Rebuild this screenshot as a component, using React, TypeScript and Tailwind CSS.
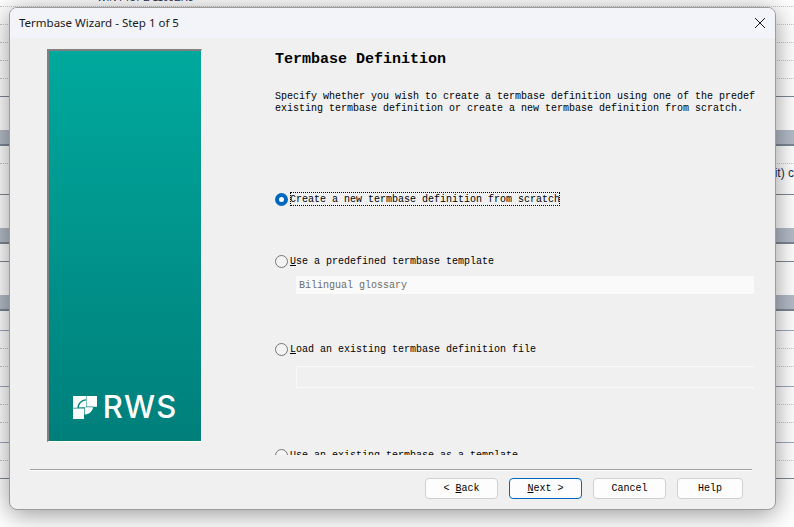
import React from "react";

const mono = "font-['Liberation_Mono',monospace]";

const Dotted = ({ h }: { h: string }) => <div className={`${h} border-b border-dotted border-[#c4c4c4]`} />;

const Solid = ({ h, line }: { h: string; line: string }) => <div className={`${h} border-b ${line}`} />;

const Band = ({ h }: { h: string }) => <div className={`${h} bg-[#b4bcc8] border-b-2 border-[#7d8794]`} />;

// the sheet behind the dialog
const BackgroundTable = () => (
  <div className="flex flex-col">
    <div className="h-[7px] border-b border-dotted border-[#c4c4c4] pl-[97px] overflow-hidden">
      <div className="text-[10px] leading-[14px] -mt-[9px] text-[#1c2c50] font-['Liberation_Sans',sans-serif]">WIN PIOPE 1105ER8</div>
    </div>
    <Dotted h="h-[18px]" />
    <Dotted h="h-[18px]" />
    <Dotted h="h-[18px]" />
    <Dotted h="h-[18px]" />
    <Solid h="h-[18px]" line="border-[#7d8794]" />
    <div className="h-[33px]" />
    <Band h="h-[16px]" />
    <Dotted h="h-[18px]" />
    <div className="h-[31px] border-b border-[#7d8794] flex justify-end items-start overflow-hidden">
      <span className="text-[12px] leading-[14px] mt-[2px] text-[#1c2c50] whitespace-nowrap font-['Liberation_Sans',sans-serif]">(64-bit) c</span>
    </div>
    <div className="h-[33px]" />
    <Band h="h-[16px]" />
    <Solid h="h-[18px]" line="border-[#7d8794]" />
    <div className="h-[33px]" />
    <Band h="h-[16px]" />
    <Solid h="h-[20px]" line="border-[#9aa6bc]" />
    <Dotted h="h-[18px]" />
    <Dotted h="h-[18px]" />
    <Solid h="h-[20px]" line="border-[#9aa6bc]" />
    <Dotted h="h-[18px]" />
    <Dotted h="h-[18px]" />
    <Solid h="h-[20px]" line="border-[#9aa6bc]" />
    <Dotted h="h-[18px]" />
    <Solid h="h-[18px]" line="border-[#7d8794]" />
  </div>
);

const RwsLogo = () => (
  <div className="flex items-center gap-[6px] text-white">
    <svg width="24" height="23" viewBox="0 0 24 23" fill="white">
      <path d="M0 0H13V3.2C8 3.6 4.8 7 4.4 11.7H0Z" />
      <path d="M13.5 0H24V10.8H20.2V10.5H13.5Z" />
      <path d="M0 12.4H11V23H0Z" />
      <path d="M5.8 11.6C6.2 8 9 5 13 4.6V11Z" />
      <path d="M11.7 11.2H20C19.6 15 16.4 18.2 11.7 18.6Z" />
    </svg>
    <span className="text-[31px] leading-[24px] font-medium tracking-[1.2px] font-['Inter',sans-serif]">RWS</span>
  </div>
);

const SidePanel = () => (
  <div className="w-[155px] h-[393px] shrink-0 flex flex-col justify-end items-center pb-[22px] border-t-2 border-l-2 border-t-[#808080] border-l-[#808080] border-r border-b border-r-white border-b-white bg-gradient-to-b from-[#00a99d] to-[#007f7b]">
    <RwsLogo />
  </div>
);

const Radio = ({ checked }: { checked?: boolean }) =>
  checked ? (
    <span className="w-[13px] h-[13px] rounded-full bg-white border-[4px] border-[#0067c0] shrink-0" />
  ) : (
    <span className="w-[13px] h-[13px] rounded-full bg-[#f3f3f3] border border-[#767676] shrink-0" />
  );

const Option = ({ accel, rest, checked, className }: { accel: string; rest: string; checked?: boolean; className?: string }) => (
  <div className={`flex items-center h-[14px] ${className ?? ""}`}>
    <Radio checked={checked} />
    <span className={`ml-[2px] pt-[1px] text-[10px] leading-[13px] whitespace-pre text-black ${checked ? "outline-1 outline-dotted outline-black -outline-offset-1" : ""}`}>
      {checked ? accel : <u>{accel}</u>}
      {rest}
    </span>
  </div>
);

const WizardButton = ({ children, primary, width }: { children: React.ReactNode; primary?: boolean; width: string }) => (
  <button className={`h-[21px] rounded-[4px] bg-[#fdfdfd] border text-[10px] leading-none text-black ${mono} ${width} ${primary ? "border-[#0067c0]" : "border-[#d0d0d0]"}`}>
    {children}
  </button>
);

const Dialog = () => (
  <div className="absolute left-[9px] top-[7px] w-[767px] h-[503px] rounded-[8px] border border-[#9c9c9c] bg-[#f0f0f0] overflow-hidden flex flex-col shadow-[0_4px_26px_rgba(0,0,0,0.42)]">
    <div className="h-[30px] shrink-0 bg-[#f3f4f9] flex items-center justify-between pl-[9px] pr-[10px]">
      <span className="text-[11.5px] text-[#1a1a1a] font-['Noto_Sans',sans-serif]">Termbase Wizard - Step 1 of 5</span>
      <svg width="10" height="10" viewBox="0 0 10 10" stroke="#1a1a1a" strokeWidth="1" fill="none">
        <path d="M0 0L10 10M10 0L0 10" />
      </svg>
    </div>

    <div className={`flex pl-[37px] pt-[11px] h-[431px] shrink-0 ${mono}`}>
      <SidePanel />
      <div className="ml-[73px] w-[480px] h-[406px] overflow-hidden flex flex-col shrink-0">
        <h1 className="mt-[2px] text-[15px] leading-[18px] font-bold text-black">Termbase Definition</h1>
        <p className="mt-[22px] text-[10px] leading-[12px] text-black whitespace-pre">
          Specify whether you wish to create a termbase definition using one of the predefined templates, an{"\n"}existing termbase definition or create a new termbase definition from scratch.
        </p>
        <Option accel="C" rest="reate a new termbase definition from scratch" checked className="mt-[77px]" />
        <Option accel="U" rest="se a predefined termbase template" className="mt-[48px]" />
        <div className="mt-[8px] ml-[21px] w-[458px] h-[18px] bg-[#fafafa] pl-[3px] text-[10px] leading-[20px] text-[#6d6d6d]">Bilingual glossary</div>
        <Option accel="L" rest="oad an existing termbase definition file" className="mt-[48px]" />
        <div className="mt-[10px] ml-[21px] w-[458px] h-[22px] border border-[#fafafa] border-r-0 shrink-0" />
        <Option accel="U" rest="se an existing termbase as a template" className="mt-[60px] shrink-0" />
      </div>
    </div>

    <div className="mx-[20px] w-[722px] border-t border-[#a0a0a0] border-b-white border-b h-[2px]" />

    <div className="flex justify-end gap-[11px] pr-[32px] mt-[7px]">
      <WizardButton width="w-[73px]">&lt; <u>B</u>ack</WizardButton>
      <WizardButton width="w-[73px]" primary><u>N</u>ext &gt;</WizardButton>
      <WizardButton width="w-[73px]">Cancel</WizardButton>
      <WizardButton width="w-[66px]">Help</WizardButton>
    </div>
  </div>
);

export default function App() {
  return (
    <div className="relative w-[794px] h-[527px] overflow-hidden bg-white">
      <BackgroundTable />
      <Dialog />
    </div>
  );
}
